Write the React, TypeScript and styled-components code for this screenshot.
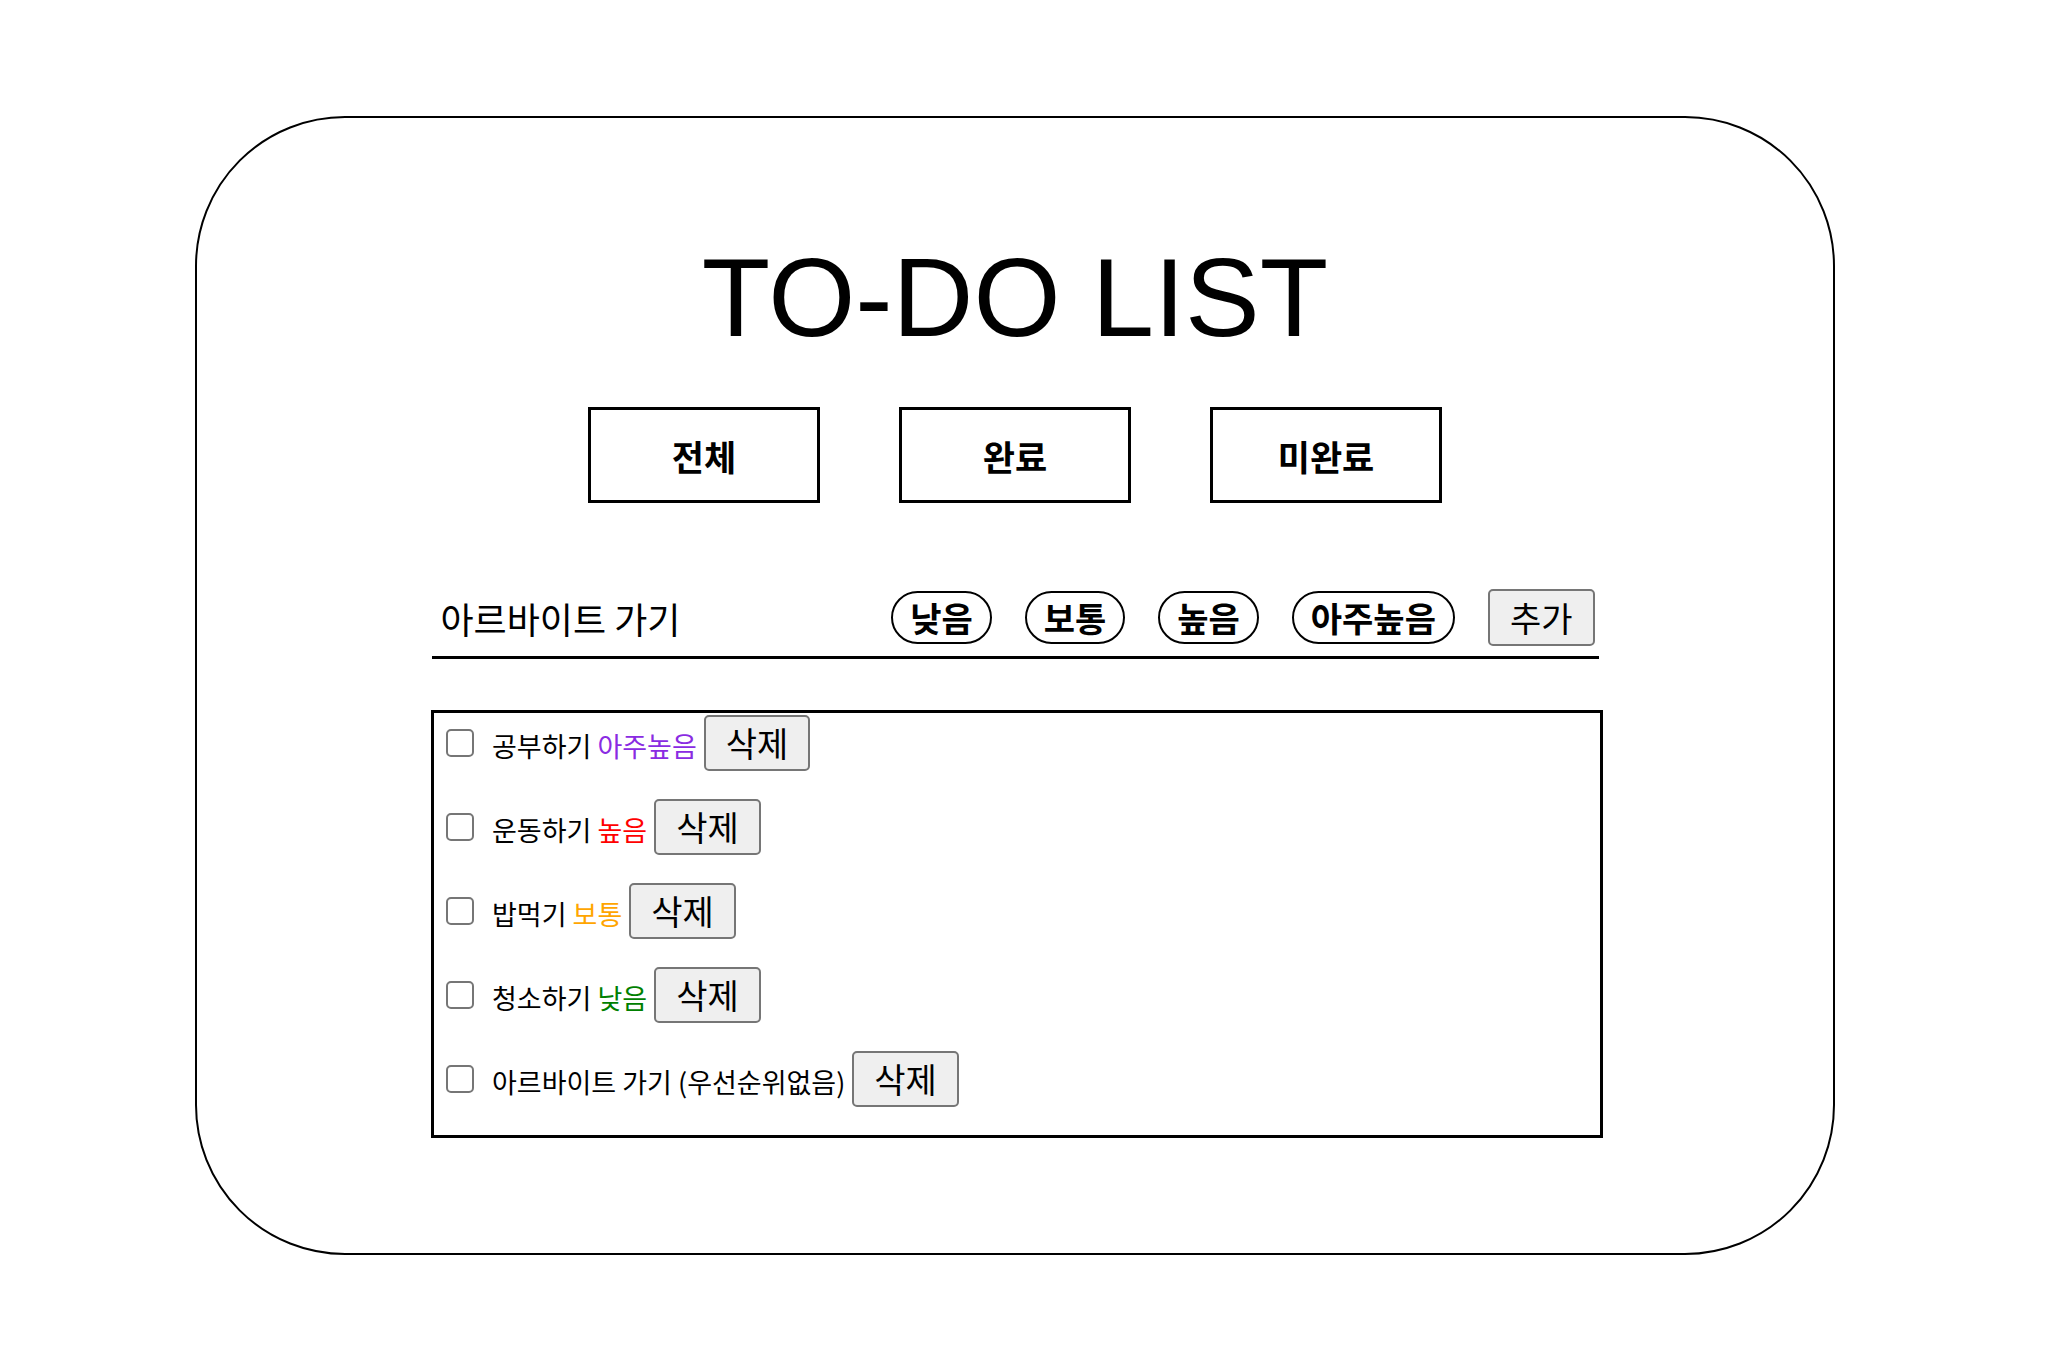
import React, { useState } from "react";
import styled, { createGlobalStyle } from "styled-components";

const GlobalStyle = createGlobalStyle`
  body {
    margin: 0;
    background: #fff;
    font-family: "Noto Sans CJK KR", "Noto Sans", sans-serif;
  }
`;

const StPage = styled.div`
  padding: 116px 0 108px 195px;
`;

const StCard = styled.div`
  width: 1640px;
  box-sizing: border-box;
  border: 2px solid #000;
  border-radius: 150px;
  padding: 114px 0 115px;
  display: flex;
  flex-direction: column;
  align-items: center;
`;

const StTitle = styled.h1`
  margin: 0;
  font-family: "Liberation Sans", Arial, sans-serif;
  font-weight: 400;
  font-size: 112px;
  line-height: 131px;
  color: #000;
`;

const StFilters = styled.div`
  display: flex;
  gap: 79px;
  margin-top: 44px;
`;

const StFilterButton = styled.button`
  width: 232px;
  height: 96px;
  box-sizing: border-box;
  border: 3px solid #000;
  background: #fff;
  font-family: "Noto Sans CJK KR", sans-serif;
  font-weight: 700;
  font-size: 35px;
  color: #000;
  cursor: pointer;
`;

const StForm = styled.form`
  width: 1167px;
  box-sizing: border-box;
  margin-top: 86px;
  padding: 0 4px 10px 0;
  border-bottom: 3px solid #000;
  display: flex;
  align-items: center;
  gap: 33px;
`;

const StInput = styled.input`
  flex: 1;
  min-width: 0;
  border: none;
  outline: none;
  padding: 0 0 0 9px;
  font-family: "Noto Sans CJK KR", sans-serif;
  font-size: 36px;
  color: #000;
  background: transparent;
`;

const StPill = styled.button<{ $active?: boolean }>`
  height: 53px;
  box-sizing: border-box;
  padding: 0 17px;
  border: 2px solid #000;
  border-radius: 999px;
  background: ${(p) => (p.$active ? "#eee" : "#fff")};
  font-family: "Noto Sans CJK KR", sans-serif;
  font-weight: 700;
  font-size: 34px;
  line-height: 1;
  color: #000;
  cursor: pointer;
`;

const StGrayButton = styled.button`
  height: 56px;
  box-sizing: border-box;
  padding: 0 20px;
  border: 2px solid #767676;
  border-radius: 5px;
  background: #efefef;
  font-family: "Noto Sans CJK KR", sans-serif;
  font-size: 34px;
  line-height: 1;
  color: #000;
  cursor: pointer;
`;

const StAddButton = styled(StGrayButton)`
  height: 57px;
`;

const StList = styled.ul`
  list-style: none;
  width: 1172px;
  box-sizing: border-box;
  margin: 51px 0 0 4px;
  padding: 2px 0 0 12px;
  border: 3px solid #000;
`;

const StItem = styled.li`
  display: flex;
  align-items: baseline;
  margin-bottom: 28px;
`;

const StCheck = styled.input`
  appearance: none;
  width: 28px;
  height: 28px;
  box-sizing: border-box;
  margin: 0 18px 0 0;
  border: 2.5px solid #767676;
  border-radius: 5px;
  background: #fff;
  cursor: pointer;

  &:checked {
    background: #0075ff;
    border-color: #0075ff;
  }
`;

const StLabel = styled.span`
  font-size: 27px;
  color: #000;
  margin-right: 7px;
`;

const StPriority = styled.span<{ $color: string }>`
  color: ${(p) => p.$color};
`;

const priorityColor: Record<string, string> = {
  아주높음: "#8a2be2",
  높음: "#ff0000",
  보통: "#ffa500",
  낮음: "#008000",
};

type Todo = { id: number; text: string; priority?: string; done: boolean };

const initialTodos: Todo[] = [
  { id: 1, text: "공부하기", priority: "아주높음", done: false },
  { id: 2, text: "운동하기", priority: "높음", done: false },
  { id: 3, text: "밥먹기", priority: "보통", done: false },
  { id: 4, text: "청소하기", priority: "낮음", done: false },
  { id: 5, text: "아르바이트 가기", done: false },
];

export default function App() {
  const [todos, setTodos] = useState(initialTodos);
  const [value, setValue] = useState("아르바이트 가기");

  return (
    <StPage>
      <GlobalStyle />
      <StCard>
        <StTitle>TO-DO LIST</StTitle>
        <StFilters>
          <StFilterButton>전체</StFilterButton>
          <StFilterButton>완료</StFilterButton>
          <StFilterButton>미완료</StFilterButton>
        </StFilters>
        <StForm onSubmit={(e) => e.preventDefault()}>
          <StInput value={value} onChange={(e) => setValue(e.target.value)} />
          <StPill type="button">낮음</StPill>
          <StPill type="button">보통</StPill>
          <StPill type="button">높음</StPill>
          <StPill type="button">아주높음</StPill>
          <StAddButton type="submit">추가</StAddButton>
        </StForm>
        <StList>
          {todos.map((t) => (
            <StItem key={t.id}>
              <StCheck
                type="checkbox"
                checked={t.done}
                onChange={() =>
                  setTodos(todos.map((x) => (x.id === t.id ? { ...x, done: !x.done } : x)))
                }
              />
              <StLabel>
                {t.text}{" "}
                {t.priority ? (
                  <StPriority $color={priorityColor[t.priority]}>{t.priority}</StPriority>
                ) : (
                  "(우선순위없음)"
                )}
              </StLabel>
              <StGrayButton onClick={() => setTodos(todos.filter((x) => x.id !== t.id))}>
                삭제
              </StGrayButton>
            </StItem>
          ))}
        </StList>
      </StCard>
    </StPage>
  );
}
